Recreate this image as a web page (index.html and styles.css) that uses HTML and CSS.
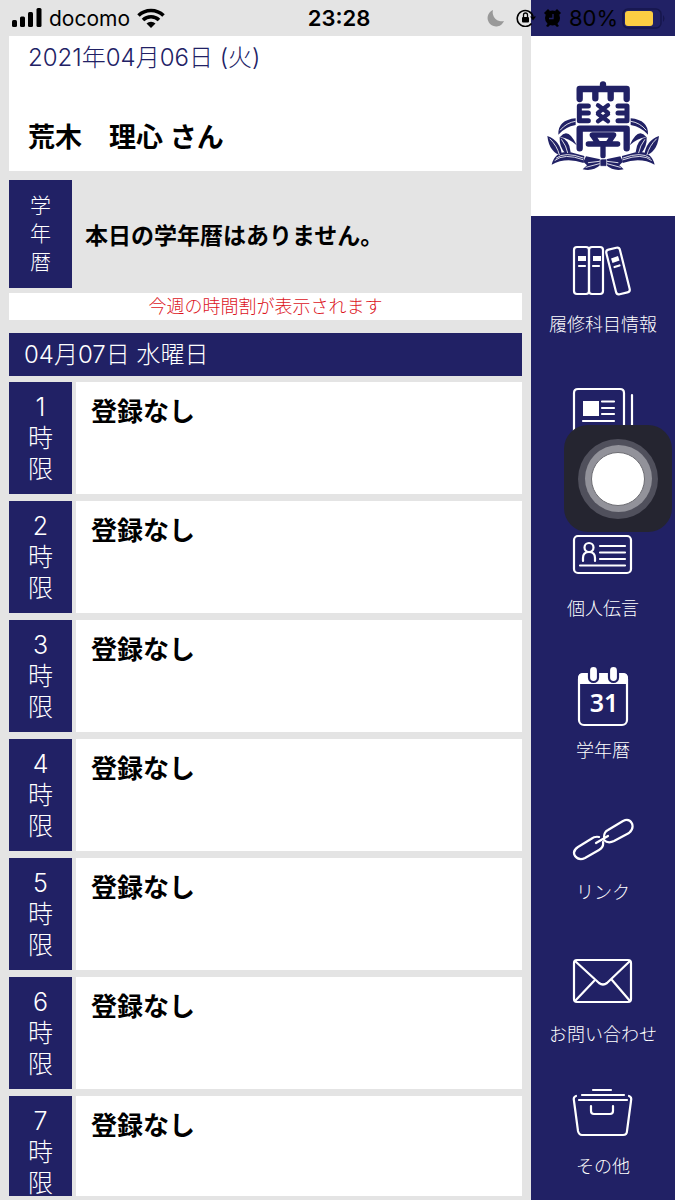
FILE: index.html
```html
<!DOCTYPE html>
<html lang="ja">
<head>
<meta charset="utf-8">
<meta name="viewport" content="width=device-width, initial-scale=1">
<title>時間割</title>
<link rel="stylesheet" href="styles.css">
</head>
<body>
<div class="app">
  <header class="status">
    <div class="status-left">
      <svg width="30" height="20" viewBox="0 0 30 20"><rect x="0" y="12" width="5" height="7" rx="1.5"/><rect x="8" y="8.500" width="5" height="10.500" rx="1.500"/><rect x="16" y="4" width="5" height="15" rx="1.500"/><rect x="24.500" y="0" width="5" height="19" rx="1.500"/></svg>
      <span class="carrier">docomo</span>
      <svg width="28" height="20" viewBox="0 0 28 20"><g fill="none" stroke="#000" stroke-width="3.600"><path d="M1.500 7.500a18 18 0 0 1 25 0"/><path d="M6 12a11.500 11.500 0 0 1 16 0"/></g><path d="M9.500 15.500a6.500 6.500 0 0 1 9 0L14 20z"/></svg>
    </div>
    <time class="clock">23:28</time>
    <div class="status-right">
      <svg width="18" height="18" viewBox="0 0 18 18"><path fill="#999" d="M6 1a8.500 8.500 0 1 0 11 11A9 9 0 0 1 6 1z"/></svg>
      <svg class="lock" width="20" height="18" viewBox="0 0 20 18"><path d="M15.500 14.500A8 8 0 1 1 17 7.500" fill="none" stroke="#000" stroke-width="1.600"/><path d="M14 7.500h6l-3 4z"/><rect x="6" y="8" width="7" height="5.500" rx="1"/><path d="M7.500 8V6a2 2 0 0 1 4 0v2" fill="none" stroke="#000" stroke-width="1.300"/></svg>
      <svg class="alarm" width="17" height="18" viewBox="0 0 17 18"><circle cx="8.500" cy="9" r="7.500"/><path d="M0 4l4-4 2 2-4 4zM17 4l-4-4-2 2 4 4zM2 17l3-4 2 2-3 3zM15 17l-3-4-2 2 3 3z"/><path d="M9 5v4.500H5" fill="none" stroke="#212165" stroke-width="1.300"/></svg>
      <span class="percent">80%</span>
      <svg width="44" height="21" viewBox="0 0 44 21"><rect x="1" y="1" width="38" height="19" rx="5" fill="none" stroke="#16164c" stroke-width="1.500"/><rect x="3" y="3" width="28" height="15" rx="3" fill="#fccd43"/><path d="M41 7q3 3.500 0 7z" fill="#16164c"/></svg>
    </div>
  </header>

  <main class="main">
    <section class="profile">
      <p class="today">2021年04月06日 (火)</p>
      <h1 class="name">荒木　理心 さん</h1>
    </section>
    <section class="calendar">
      <h2 class="calendar-tag"><span>学</span><span>年</span><span>暦</span></h2>
      <p class="calendar-text">本日の学年暦はありません。</p>
    </section>
    <p class="notice">今週の時間割が表示されます</p>
    <h2 class="day">04月07日 水曜日</h2>
    <ol class="periods">
      <li class="period"><div class="period-tag"><span>1</span><span>時</span><span>限</span></div><p class="period-text">登録なし</p></li>
      <li class="period"><div class="period-tag"><span>2</span><span>時</span><span>限</span></div><p class="period-text">登録なし</p></li>
      <li class="period"><div class="period-tag"><span>3</span><span>時</span><span>限</span></div><p class="period-text">登録なし</p></li>
      <li class="period"><div class="period-tag"><span>4</span><span>時</span><span>限</span></div><p class="period-text">登録なし</p></li>
      <li class="period"><div class="period-tag"><span>5</span><span>時</span><span>限</span></div><p class="period-text">登録なし</p></li>
      <li class="period"><div class="period-tag"><span>6</span><span>時</span><span>限</span></div><p class="period-text">登録なし</p></li>
      <li class="period"><div class="period-tag"><span>7</span><span>時</span><span>限</span></div><p class="period-text">登録なし</p></li>
    </ol>
  </main>

  <aside class="side">
    <div class="crest">
      <svg width="114" height="94" viewBox="45 62 342 282" fill="none" stroke="#212165" stroke-linecap="round" stroke-linejoin="round">
        <g stroke-width="19">
          <path d="M146 122V92H287V122M216 78V92M193 92V120M239 92V120"/>
          <path d="M145 143H172M145 164H172M145 187H172M145 143V187M261 143H288M261 164H288M261 187H288M288 143V187" stroke-width="15"/>
          <path d="M201 141L231 163M231 141L201 163M201 167L231 189M231 167L201 189" stroke-width="13"/>
          <path d="M146 270V211H287V270"/>
          <path d="M184 230H248L230 256H202L184 230M172 257H260M216 256V292" stroke-width="16"/>
        </g>
        <g id="laurel" fill="#212165" stroke="none">
          <path d="M134 180Q80 185 82 229Q102 206 134 200z"/>
          <path d="M87 236Q112 205 137 261Q115 240 87 236z"/>
          <path d="M49 233Q89 247 93 292Q55 284 49 233z"/>
          <path d="M86 236Q116 243 119 282L104 287Q84 265 86 236z"/>
          <path d="M62 319Q73 275 119 282L160 293L158 314Q104 296 62 319z"/>
          <path d="M165 294L208 303L207 321Q186 340 155 333L168 321L157 310z"/>
          <g fill="none" stroke="#fff" stroke-width="2.500"><path d="M88 215Q106 193 133 189M57 242Q78 262 85 289M92 244Q106 262 110 283M72 306Q99 283 156 304M76 299Q101 278 157 299M172 313L205 309M165 327L205 316"/></g>
        </g>
        <use href="#laurel" transform="translate(433 0) scale(-1 1)"/>
        <rect x="207" y="302" width="20" height="22" rx="3" fill="#212165" stroke="#fff" stroke-width="2"/>
      </svg>
    </div>
    <nav class="nav">
      <a class="nav-item" href="#courses">
        <svg class="nav-icon" viewBox="0 0 64 64"><rect x="3" y="8" width="15" height="47" rx="3"/><rect x="18" y="8" width="14" height="47" rx="3"/><g transform="rotate(-14 47 32)"><rect x="40" y="9" width="14" height="46" rx="3"/></g><path d="M8 27h6M22 27h6M43.500 28l5-1.500"/><path class="solid" d="M7 17h8v5H7zM22 17h8v5h-8zM40 19.500l7-2.500 1.500 4.500-7 2.500z"/></svg>
        <span class="nav-label">履修科目情報</span>
      </a>
      <a class="nav-item" href="#news" aria-label="お知らせ">
        <svg class="nav-icon" viewBox="0 0 64 64"><path d="M3 56V12q0-4 4-4h42q4 0 4 4v44M61 14v41M31 20.500h12M31 27h12M31 33h12M12 40h31"/><path class="solid" d="M12 20h16v15H12z"/></svg>
      </a>
      <a class="nav-item" href="#messages">
        <svg class="nav-icon" viewBox="0 0 64 64"><rect x="3" y="13" width="57" height="37" rx="4"/><circle cx="18" cy="24.500" r="4.500"/><path d="M12 38v-3q0-6 6-6t6 6v3M29 23h25M29 29.500h25M29 36h25M9 42.500h45"/></svg>
        <span class="nav-label">個人伝言</span>
      </a>
      <a class="nav-item" href="#calendar">
        <svg class="nav-icon" viewBox="0 0 64 64"><rect x="8" y="9" width="48" height="51" rx="5"/><path class="solid" d="M7 19v-6q0-5 5-5h40q5 0 5 5v6z"/><g class="ring"><rect x="18" y="1" width="9" height="16" rx="4.500"/><rect x="38" y="1" width="9" height="16" rx="4.500"/></g><text class="icon-date" x="33" y="47">31</text></svg>
        <span class="nav-label">学年暦</span>
      </a>
      <a class="nav-item" href="#links">
        <svg class="nav-icon" viewBox="0 0 64 64"><path d="M33 30Q33 25 37 23L52 14Q58 11 61 16.500Q63 22 58 26L43 34Q37 37 33 33M28 30Q24 29 20 32L7 40Q1 44 4 49Q8 54 14 51L28 43Q33 40 32 35M25 36L37 29"/></svg>
        <span class="nav-label">リンク</span>
      </a>
      <a class="nav-item" href="#contact">
        <svg class="nav-icon" viewBox="0 0 64 64"><rect x="3" y="11" width="57" height="42" rx="3"/><path d="M4 12l24 22q4 3 8 0l23-22M4 52l19-20M59 52L41 31"/></svg>
        <span class="nav-label">お問い合わせ</span>
      </a>
      <a class="nav-item nav-item-last" href="#other">
        <svg class="nav-icon" viewBox="0 0 64 64"><path d="M22 9h18M11 14h42M8 19h48M5 15q-3 1-2 5l4 30q1 4 4 4h41q4 0 4-4l4-30q1-4-2-5M20 25v5q0 3 3 3h16q3 0 3-3v-5"/></svg>
        <span class="nav-label">その他</span>
      </a>
    </nav>
  </aside>

  <button class="assist" type="button" aria-label="AssistiveTouch"><span class="assist-ring"><span class="assist-mid"><span class="assist-dot"></span></span></span></button>
</div>
</body>
</html>
```
FILE: styles.css
```css
* { box-sizing: border-box; }
body, h1, h2, p, ol { margin: 0; padding: 0; }
body {
  background: #e4e4e4;
  color: #000;
  font-family: Inter, "Noto Sans CJK JP", sans-serif;
}
.app {
  position: relative;
  display: grid;
  grid-template-columns: minmax(0, 1fr) 144px;
  height: 100vh;
  overflow: hidden;
}

.status {
  position: absolute;
  top: 0;
  left: 0;
  right: 0;
  z-index: 2;
  height: 36px;
  padding: 0 9px 0 12px;
  display: grid;
  grid-template-columns: 1fr auto 1fr;
  align-items: center;
  font-size: 22px;
}
.status svg { display: block; flex: none; }
.status-left { display: flex; align-items: center; gap: 7px; }
.status-right { display: flex; align-items: center; justify-content: flex-end; }
.carrier { font-size: 21px; }
.clock { font-weight: 600; }
.lock { margin-left: 11px; }
.alarm { margin: 0 8px; }
.percent { margin-right: 4px; }

.main {
  display: flex;
  flex-direction: column;
  min-height: 0;
  padding: 36px 9px 4px;
}
.profile {
  flex: none;
  height: 135px;
  padding: 4px 19px;
  background: #fff;
}
.today { padding-bottom: 44px; color: #212165; font-size: 24px; line-height: 36px; font-weight: 300; }
.name { font-size: 27px; line-height: 36px; font-weight: 600; }
.calendar {
  display: flex;
  align-items: center;
  gap: 13px;
  margin: 9px 0 5px;
}
.calendar-tag {
  display: flex;
  flex-direction: column;
  justify-content: center;
  width: 63px;
  height: 108px;
  background: #212165;
  color: #fff;
  font-size: 21px;
  line-height: 28px;
  font-weight: 300;
  text-align: center;
}
.calendar-text { font-size: 23px; font-weight: 600; }
.notice {
  background: #fff;
  color: #dc141c;
  font-size: 18px;
  line-height: 27px;
  font-weight: 300;
  text-align: center;
}
.day {
  flex: none;
  margin: 13px 0 6px;
  padding: 0 15px;
  background: #212165;
  color: #fff;
  font-size: 24px;
  line-height: 43px;
  font-weight: 300;
}
.periods {
  flex: 1;
  min-height: 0;
  overflow: hidden;
  display: flex;
  flex-direction: column;
  gap: 7px;
  list-style: none;
}
.period { flex: none; display: flex; gap: 4px; }
.period-tag {
  display: flex;
  flex-direction: column;
  width: 63px;
  padding: 10px 0 9px;
  background: #212165;
  color: #fff;
  font-size: 25px;
  line-height: 31px;
  font-weight: 300;
  text-align: center;
}
.period-text {
  flex: 1;
  padding: 12px 15px;
  background: #fff;
  font-size: 26px;
  line-height: 36px;
  font-weight: 600;
}

.side { padding-top: 36px; background: #212165; }
.crest {
  display: flex;
  align-items: center;
  justify-content: center;
  height: 180px;
  background: #fff;
}
.nav {
  display: flex;
  flex-direction: column;
  gap: 44px;
  padding-top: 23px;
}
.nav-item {
  display: flex;
  flex-direction: column;
  align-items: center;
  gap: 10px;
  min-height: 98px;
  color: #fff;
  text-decoration: none;
}
.nav-item-last { margin-top: -10px; }
.nav-icon {
  width: 64px;
  height: 64px;
  fill: none;
  stroke: #fff;
  stroke-width: 2.2;
  stroke-linecap: round;
  stroke-linejoin: round;
}
.solid { fill: #fff; stroke: none; }
.ring { fill: #fff; stroke: #212165; }
.icon-date {
  fill: #fff;
  stroke: none;
  font: 600 25px "Noto Sans", sans-serif;
  text-anchor: middle;
}
.nav-label { font-size: 18px; line-height: 24px; font-weight: 300; white-space: nowrap; }

.assist {
  position: absolute;
  z-index: 3;
  top: 425px;
  right: 3px;
  display: grid;
  place-items: center;
  width: 108px;
  height: 107px;
  padding: 0;
  border: 0;
  border-radius: 24px;
  background: #252530;
}
.assist-ring, .assist-mid, .assist-dot { display: grid; place-items: center; border-radius: 50%; }
.assist-ring { width: 80px; height: 80px; background: #50505c; }
.assist-mid { width: 67px; height: 67px; background: #92929a; }
.assist-dot { width: 54px; height: 54px; border: 1px solid #6c6c72; background: #fff; }
```
